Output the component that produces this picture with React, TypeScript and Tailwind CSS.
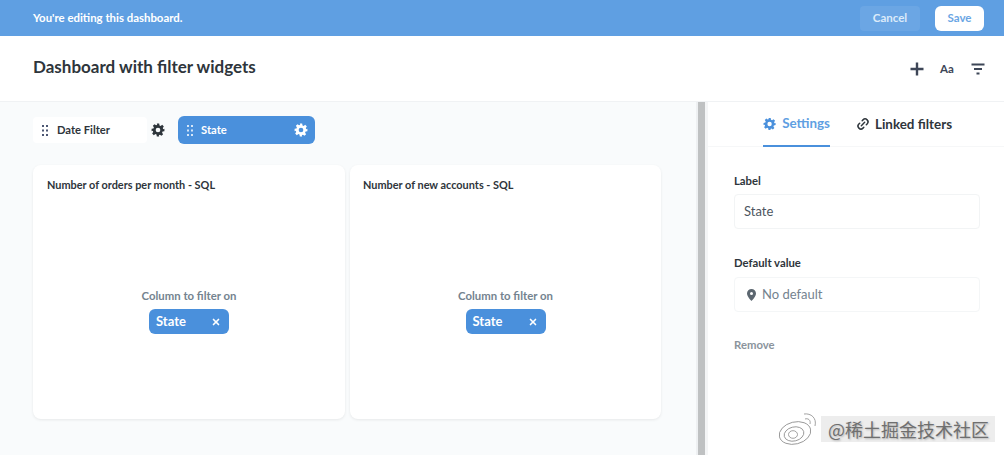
import { Link2, X } from 'lucide-react';

function GripDots({ className }: { className: string }) {
  return (
    <svg width="6" height="11" viewBox="0 0 6 11" className={className} fill="currentColor">
      <rect x="0" y="0" width="2" height="2" />
      <rect x="4" y="0" width="2" height="2" />
      <rect x="0" y="4.5" width="2" height="2" />
      <rect x="4" y="4.5" width="2" height="2" />
      <rect x="0" y="9" width="2" height="2" />
      <rect x="4" y="9" width="2" height="2" />
    </svg>
  );
}

function Gear({ className }: { className: string }) {
  return (
    <svg width="14" height="14" viewBox="0 0 24 24" className={className}>
      <path
        fill="currentColor"
        fillRule="evenodd"
        d="M10 1h4l.6 3.2 1.9.8 2.7-1.8 2.800 2.800-1.800 2.700.8 1.900L23 10v4l-3.200.6-.8 1.900 1.800 2.700-2.800 2.800-2.700-1.800-1.900.8L14 23h-4l-.6-3.200-1.900-.8-2.700 1.800L2 18l1.800-2.700-.8-1.900L1 14v-4l3.200-.6.8-1.900L3.200 4.800 6 2l2.700 1.800 1.900-.8L10 1zm2 7a4 4 0 1 0 0 8 4 4 0 0 0 0-8z"
      />
    </svg>
  );
}

function ColumnCard({ title, className }: { title: string; className: string }) {
  return (
    <div className={`h-[254px] flex flex-col bg-white rounded-lg shadow-[0_1px_3px_rgba(0,0,0,0.08)] pt-[13px] ${className}`}>
      <div className="text-[10.9px] leading-[14px] font-bold text-[#2e353b]">{title}</div>
      <div className="flex flex-col items-center mt-[97px]">
        <div className="text-[11.35px] leading-[14px] font-bold text-[#74838f]">Column to filter on</div>
        <div className="mt-[6px] w-[80px] h-[25px] flex items-center justify-between pl-[7px] pr-[8px] rounded-md bg-[#4a90dc] text-white">
          <span className="text-[13px] font-bold">State</span>
          <X size={10} strokeWidth={4} />
        </div>
      </div>
    </div>
  );
}

export default function App() {
  return (
    <div className="relative w-[1004px] h-[455px] overflow-hidden flex flex-col bg-white font-['Lato','Open_Sans',sans-serif]">
      <div className="h-[36px] shrink-0 flex items-center justify-between pl-[33px] pr-[20px] bg-[#5f9fe2] text-white">
        <span className="text-[11.4px] font-bold">You're editing this dashboard.</span>
        <div className="flex items-center gap-[15px]">
          <button className="w-[60px] h-[25px] rounded bg-[#6ba6e4] text-[11.5px] font-bold text-[#dcebfa]">Cancel</button>
          <button className="w-[49px] h-[25px] rounded-md bg-white text-[11.5px] font-bold text-[#6ba6e4]">Save</button>
        </div>
      </div>

      <div className="h-[66px] shrink-0 flex items-center justify-between pl-[33px] pr-[19px] border-b border-[#f0f2f4]">
        <h1 className="text-[17px] font-bold text-[#2e353b] -mt-[4px]">Dashboard with filter widgets</h1>
        <div className="flex items-center text-[#2e353b]">
          <svg width="14" height="14" viewBox="0 0 14 14" className="text-[#3d4657]">
            <path d="M7 0.500v13M0.500 7h13" stroke="currentColor" strokeWidth="2.400" />
          </svg>
          <span className="w-[15px] ml-[16px] text-[11.5px] font-bold text-[#3d4657]">Aa</span>
          <svg width="14" height="12" viewBox="0 0 14 12" className="ml-[16px] text-[#3d4657]">
            <path d="M0.500 1.500h13M3 6h8M5.500 10.500h3" stroke="currentColor" strokeWidth="2" />
          </svg>
        </div>
      </div>

      <div className="flex-1 flex min-h-0">
        <div className="w-[696px] shrink-0 bg-[#f9fbfc] pl-[33px] pt-[14px]">
          <div className="flex items-center">
            <div className="w-[145px] flex items-center text-[#2e353b]">
              <div className="w-[114px] h-[26px] flex items-center bg-white rounded pl-[9px]">
                <GripDots className="text-[#4c5773]" />
                <span className="ml-[9px] text-[11.2px] font-bold">Date Filter</span>
              </div>
              <Gear className="ml-[4px] text-[#2e353b]" />
            </div>
            <div className="w-[137px] h-[28px] flex items-center bg-[#4a90dc] rounded-md pl-[9px] pr-[7px] text-white">
              <GripDots className="text-[#d5e6f8]" />
              <span className="ml-[8px] flex-1 text-[11.2px] font-bold">State</span>
              <Gear className="text-white" />
            </div>
          </div>
          <div className="flex gap-[5px] mt-[21px]">
            <ColumnCard title="Number of orders per month - SQL" className="w-[312px] px-[14px]" />
            <ColumnCard title="Number of new accounts - SQL" className="w-[311px] px-[13px]" />
          </div>
        </div>

        <div className="w-[2px] shrink-0 bg-[#eef0f2]" />
        <div className="w-[7px] shrink-0 bg-[#bfc1c2]" />
        <div className="w-[3px] shrink-0 bg-[#f4f5f6]" />

        <div className="flex-1 min-w-0 bg-white">
          <div className="h-[45px] flex items-stretch border-b border-[#f6f7f8] pl-[55px]">
            <div className="w-[67px] flex items-center gap-[6px] border-b-2 border-[#4a90dc] text-[#5f9fe2] h-[45px]">
              <Gear className="text-[#4a90dc]" />
              <span className="text-[13.4px] font-bold">Settings</span>
            </div>
            <div className="ml-[26px] flex items-center gap-[5px] text-[#2e353b]">
              <Link2 size={14} strokeWidth={2.5} className="-rotate-45" />
              <span className="text-[13.4px] font-bold">Linked filters</span>
            </div>
          </div>

          <div className="pl-[26px] pr-[24px] pt-[27px]">
            <div className="text-[11.3px] leading-[14px] font-bold text-[#2e353b]">Label</div>
            <div className="mt-[6px] h-[35px] flex items-center pl-[9px] border border-[#f2f4f5] rounded text-[13px] text-[#4c5560]">
              State
            </div>
            <div className="mt-[27px] text-[11.3px] leading-[14px] font-bold text-[#2e353b]">Default value</div>
            <div className="mt-[7px] h-[35px] flex items-center pl-[12px] border border-[#f4f6f7] rounded text-[13px] text-[#74838f]">
              <svg width="9" height="12" viewBox="0 0 9 12" className="text-[#5c6770]">
                <path
                  fill="currentColor"
                  fillRule="evenodd"
                  d="M4.500 0a4.500 4.500 0 0 1 4.500 4.500C9 7.500 4.500 12 4.500 12S0 7.500 0 4.500A4.500 4.500 0 0 1 4.500 0zm0 3a1.500 1.500 0 1 0 0 3 1.500 1.500 0 0 0 0-3z"
                />
              </svg>
              <span className="ml-[6px]">No default</span>
            </div>
            <div className="mt-[26px] text-[11.3px] leading-[14px] font-bold text-[#8b949c]">Remove</div>
          </div>
        </div>
      </div>

      <div className="absolute left-[778px] top-[412px] flex items-center">
        <svg width="40" height="34" viewBox="0 0 40 34" fill="none" stroke="#8a8a8a" strokeWidth="0.800">
          <ellipse cx="17" cy="21" rx="16" ry="11" transform="rotate(-14 17 21)" />
          <ellipse cx="16" cy="22" rx="10" ry="7" transform="rotate(-14 16 22)" />
          <ellipse cx="15" cy="22.500" rx="4.500" ry="3.800" />
          <path d="M26 2c7-1 13 4 11 12M27 7c3-1 6 1 5 5" />
        </svg>
        <span className="ml-[3px] pl-[7px] pr-[6px] bg-[#e6e6e6]/70 text-[18px] leading-[26px] text-[#6f6f6f] [text-shadow:1px_1px_2px_#b0b0b0] font-['Noto_Sans_CJK_SC',sans-serif]">@稀土掘金技术社区</span>
      </div>
    </div>
  );
}
